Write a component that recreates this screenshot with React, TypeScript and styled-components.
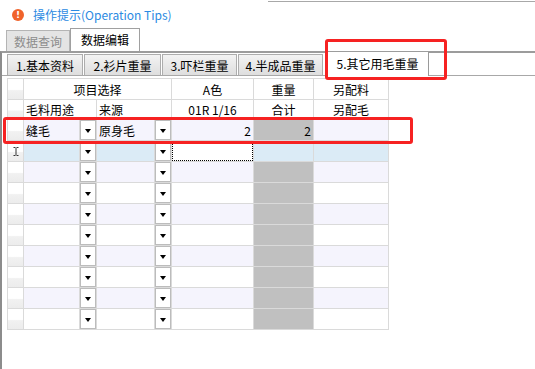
import React from "react";
import styled, { createGlobalStyle, css } from "styled-components";

const GlobalStyle = createGlobalStyle`
  html, body {
    margin: 0;
    padding: 0;
    background: #fff;
  }
  body {
    font-family: "Noto Sans CJK SC", "Microsoft YaHei", sans-serif;
    font-size: 12px;
    color: #000;
  }
`;

const Page = styled.div`
  position: relative;
  width: 535px;
  height: 369px;
  overflow: hidden;
  display: flex;
  flex-direction: column;
`;

const TitleBar = styled.div`
  height: 28px;
  display: flex;
  align-items: center;
  padding-left: 12px;
  box-sizing: border-box;
  background: linear-gradient(#a8a8a8, #a8a8a8) no-repeat 268px 1px / 267px 1px;
`;

const WarnIcon = styled.span`
  width: 12px;
  height: 12px;
  margin-top: 2px;
  border-radius: 50%;
  background: #f0632b;
  color: #fff;
  font: bold 9px/12px "DejaVu Sans", sans-serif;
  text-align: center;
`;

const TitleText = styled.span`
  margin-left: 9px;
  margin-top: 1px;
  color: #2b8ae2;
  white-space: nowrap;
`;

const OuterTabStrip = styled.div`
  height: 23px;
  display: flex;
  align-items: flex-end;
  padding-left: 6px;
`;

const OuterTab = styled.div<{ $active?: boolean }>`
  box-sizing: border-box;
  height: 21px;
  padding: 0 7px;
  display: flex;
  align-items: center;
  border: 1px solid #b4b4b4;
  border-bottom: none;
  background: #e4e4e4;
  color: #8c8c8c;
  ${(p) =>
    p.$active &&
    css`
      height: 23px;
      padding: 0 10px 2px;
      border-color: #a0a0a0;
      background: #fff;
      color: #000;
    `}
`;

const OuterPanel = styled.div`
  flex: 1;
  display: flex;
  flex-direction: column;
  border-top: 2px solid #9c9c9c;
  border-left: 2px solid #8c8c8c;
`;

const InnerTabStrip = styled.div`
  box-sizing: border-box;
  height: 23px;
  display: flex;
  align-items: flex-end;
  gap: 1px;
  padding-left: 5px;
  border-bottom: 1px solid #a8a8a8;
`;

const InnerTab = styled.div<{ $w: number; $active?: boolean }>`
  box-sizing: border-box;
  width: ${(p) => p.$w}px;
  height: 21px;
  display: flex;
  align-items: center;
  justify-content: center;
  border: 1px solid #adadad;
  border-bottom: none;
  background: linear-gradient(#f3f3f3, #dedede);
  white-space: nowrap;
  ${(p) =>
    p.$active &&
    css`
      position: relative;
      align-self: stretch;
      height: auto;
      margin: -1px 0 -1px 2px;
      padding-bottom: 2px;
      border-top: none;
      border-color: #9a9a9a;
      background: #fff;
    `}
`;

const GridWrap = styled.div`
  padding: 2px 0 0 5px;
`;

const Grid = styled.div`
  display: grid;
  width: max-content;
  grid-template-columns: 15px 55px 16px 57px 16px 81px 59px 74px;
  grid-template-rows: 20px 19px repeat(10, 20px);
  gap: 1px;
  background: #dadada;
  border: 1px solid #dadada;
`;

const HeadCell = styled.div<{ $span?: number; $align?: "left" | "center" }>`
  grid-column: span ${(p) => p.$span || 1};
  display: flex;
  align-items: center;
  justify-content: ${(p) => (p.$align === "left" ? "flex-start" : "center")};
  padding-left: ${(p) => (p.$align === "left" ? "2px" : "0")};
  background: #fff;
  white-space: nowrap;
`;

const RowHead = styled.div`
  display: flex;
  align-items: center;
  justify-content: center;
  background: linear-gradient(#fff 0%, #fff 52%, #f1f1f1 58%, #ececec 100%);
`;

type Tone = "lavender" | "white" | "blue" | "grey";

const toneColor: Record<Tone, string> = {
  lavender: "#f5f4fd",
  white: "#fff",
  blue: "#dbebf6",
  grey: "#c0c0c0",
};

const DataCell = styled.div<{ $tone: Tone; $right?: boolean; $focus?: boolean }>`
  display: flex;
  align-items: center;
  justify-content: ${(p) => (p.$right ? "flex-end" : "flex-start")};
  padding: ${(p) => (p.$right ? "0 2px 0 0" : "0 0 0 2px")};
  background: ${(p) => toneColor[p.$tone]};
  white-space: nowrap;
  ${(p) =>
    p.$focus &&
    css`
      outline: 1px dotted #000;
      outline-offset: -1px;
    `}
`;

const DropCell = styled.div`
  display: flex;
  align-items: center;
  justify-content: center;
  background: #fff;
  box-shadow: inset 0 0 0 1px #bcbcbc;
`;

const DropArrow = styled.span`
  width: 0;
  height: 0;
  margin-top: 1px;
  border-left: 3.5px solid transparent;
  border-right: 3.5px solid transparent;
  border-top: 4px solid #000;
`;

const Highlight = styled.div<{ $x: number; $y: number; $w: number; $h: number }>`
  position: absolute;
  left: ${(p) => p.$x}px;
  top: ${(p) => p.$y}px;
  width: ${(p) => p.$w}px;
  height: ${(p) => p.$h}px;
  box-sizing: border-box;
  border: 3px solid #f62222;
  border-radius: 3px;
  pointer-events: none;
`;

const IBeam = () => (
  <svg width="6" height="9" viewBox="0 0 6 9">
    <path d="M0.5 0.5h2M3.5 0.5h2M3 1v7M0.5 8.5h2M3.5 8.5h2" stroke="#333" strokeWidth="1" fill="none" />
  </svg>
);

const innerTabs = [
  { label: "1.基本资料", w: 76 },
  { label: "2.衫片重量", w: 77 },
  { label: "3.吓栏重量", w: 75 },
  { label: "4.半成品重量", w: 85 },
];

const rows = [
  { use: "缝毛", src: "原身毛", color: "2", weight: "2" },
  ...Array.from({ length: 9 }, () => ({ use: "", src: "", color: "", weight: "" })),
];

export default function App() {
  return (
    <>
      <GlobalStyle />
      <Page>
        <TitleBar>
          <WarnIcon>!</WarnIcon>
          <TitleText>操作提示(Operation Tips)</TitleText>
        </TitleBar>
        <OuterTabStrip>
          <OuterTab>数据查询</OuterTab>
          <OuterTab $active>数据编辑</OuterTab>
        </OuterTabStrip>
        <OuterPanel>
          <InnerTabStrip>
            {innerTabs.map((t) => (
              <InnerTab key={t.label} $w={t.w}>
                {t.label}
              </InnerTab>
            ))}
            <InnerTab $w={103} $active>
              5.其它用毛重量
            </InnerTab>
          </InnerTabStrip>
          <GridWrap>
            <Grid>
              <RowHead />
              <HeadCell $span={4}>项目选择</HeadCell>
              <HeadCell>A色</HeadCell>
              <HeadCell>重量</HeadCell>
              <HeadCell>另配料</HeadCell>

              <RowHead />
              <HeadCell $span={2} $align="left">毛料用途</HeadCell>
              <HeadCell $span={2} $align="left">来源</HeadCell>
              <HeadCell>01R 1/16</HeadCell>
              <HeadCell>合计</HeadCell>
              <HeadCell>另配毛</HeadCell>

              {rows.map((r, i) => {
                const selected = i === 1;
                const tone: Tone = selected ? "blue" : i % 2 === 0 ? "lavender" : "white";
                return (
                  <React.Fragment key={i}>
                    <RowHead>{selected && <IBeam />}</RowHead>
                    <DataCell $tone={tone}>{r.use}</DataCell>
                    <DropCell>
                      <DropArrow />
                    </DropCell>
                    <DataCell $tone={tone}>{r.src}</DataCell>
                    <DropCell>
                      <DropArrow />
                    </DropCell>
                    <DataCell $tone={selected ? "white" : tone} $right $focus={selected}>
                      {r.color}
                    </DataCell>
                    <DataCell $tone={selected ? "blue" : "grey"} $right>
                      {r.weight}
                    </DataCell>
                    <DataCell $tone={tone} />
                  </React.Fragment>
                );
              })}
            </Grid>
          </GridWrap>
        </OuterPanel>
        <Highlight $x={325} $y={39} $w={122} $h={41} />
        <Highlight $x={3} $y={117} $w={410} $h={27} />
      </Page>
    </>
  );
}
